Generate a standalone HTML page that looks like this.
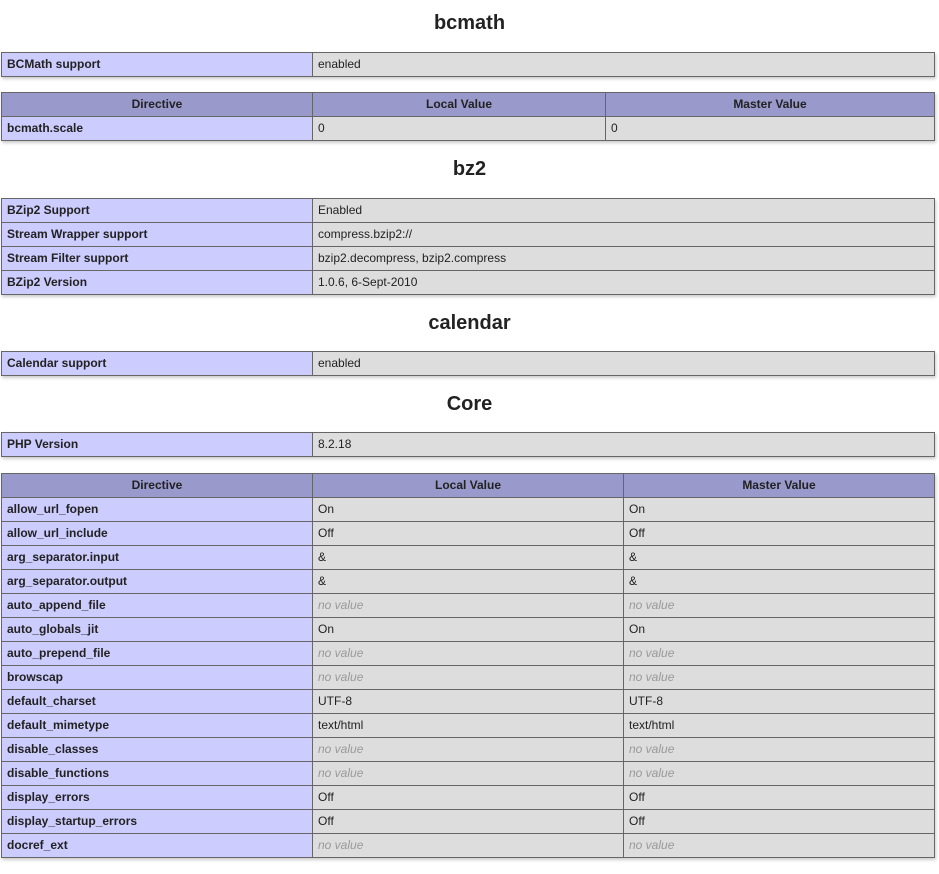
<!DOCTYPE html>
<html><head><meta charset="utf-8"><style>
body{margin:0;background:#fff;color:#222;font-family:"Liberation Sans",Arial,sans-serif;}
.c{padding-top:11px;}
h2{margin:16px 0;font-size:20px;line-height:25px;text-align:center;font-weight:bold;}
h2.f{margin-top:0;}
table{border-collapse:collapse;width:934px;margin:16px 0 16px 1px;box-shadow:1px 2px 3px #ccc;table-layout:fixed;}
td,th{border:1px solid #666;font-size:12px;line-height:15px;padding:4px 5px;text-align:left;white-space:nowrap;overflow:hidden;}
.e{background:#ccf;font-weight:bold;}
.v{background:#ddd;}
.h th{background:#99c;font-weight:bold;text-align:center;}
i{color:#999;}
</style></head><body><div class="c">
<h2 class="f">bcmath</h2>
<table style="margin-bottom:15px"><col style="width:311px"><col>
<tr><td class="e">BCMath support</td><td class="v">enabled</td></tr></table>
<table style="margin-top:15px"><col style="width:311px"><col style="width:293px"><col>
<tr class="h"><th>Directive</th><th>Local Value</th><th>Master Value</th></tr>
<tr><td class="e">bcmath.scale</td><td class="v">0</td><td class="v">0</td></tr></table>
<h2>bz2</h2>
<table><col style="width:311px"><col>
<tr><td class="e">BZip2 Support</td><td class="v">Enabled</td></tr>
<tr><td class="e">Stream Wrapper support</td><td class="v">compress.bzip2://</td></tr>
<tr><td class="e">Stream Filter support</td><td class="v">bzip2.decompress, bzip2.compress</td></tr>
<tr><td class="e">BZip2 Version</td><td class="v">1.0.6, 6-Sept-2010</td></tr></table>
<h2 style="margin-bottom:15px">calendar</h2>
<table style="margin-top:15px"><col style="width:311px"><col>
<tr><td class="e">Calendar support</td><td class="v">enabled</td></tr></table>
<h2 style="margin-bottom:15px">Core</h2>
<table style="margin-top:15px"><col style="width:311px"><col>
<tr><td class="e">PHP Version</td><td class="v">8.2.18</td></tr></table>
<table><col style="width:311px"><col style="width:311px"><col>
<tr class="h"><th>Directive</th><th>Local Value</th><th>Master Value</th></tr>
<tr><td class="e">allow_url_fopen</td><td class="v">On</td><td class="v">On</td></tr>
<tr><td class="e">allow_url_include</td><td class="v">Off</td><td class="v">Off</td></tr>
<tr><td class="e">arg_separator.input</td><td class="v">&amp;</td><td class="v">&amp;</td></tr>
<tr><td class="e">arg_separator.output</td><td class="v">&amp;</td><td class="v">&amp;</td></tr>
<tr><td class="e">auto_append_file</td><td class="v"><i>no value</i></td><td class="v"><i>no value</i></td></tr>
<tr><td class="e">auto_globals_jit</td><td class="v">On</td><td class="v">On</td></tr>
<tr><td class="e">auto_prepend_file</td><td class="v"><i>no value</i></td><td class="v"><i>no value</i></td></tr>
<tr><td class="e">browscap</td><td class="v"><i>no value</i></td><td class="v"><i>no value</i></td></tr>
<tr><td class="e">default_charset</td><td class="v">UTF-8</td><td class="v">UTF-8</td></tr>
<tr><td class="e">default_mimetype</td><td class="v">text/html</td><td class="v">text/html</td></tr>
<tr><td class="e">disable_classes</td><td class="v"><i>no value</i></td><td class="v"><i>no value</i></td></tr>
<tr><td class="e">disable_functions</td><td class="v"><i>no value</i></td><td class="v"><i>no value</i></td></tr>
<tr><td class="e">display_errors</td><td class="v">Off</td><td class="v">Off</td></tr>
<tr><td class="e">display_startup_errors</td><td class="v">Off</td><td class="v">Off</td></tr>
<tr><td class="e">docref_ext</td><td class="v"><i>no value</i></td><td class="v"><i>no value</i></td></tr>
</table>
</div></body></html>
